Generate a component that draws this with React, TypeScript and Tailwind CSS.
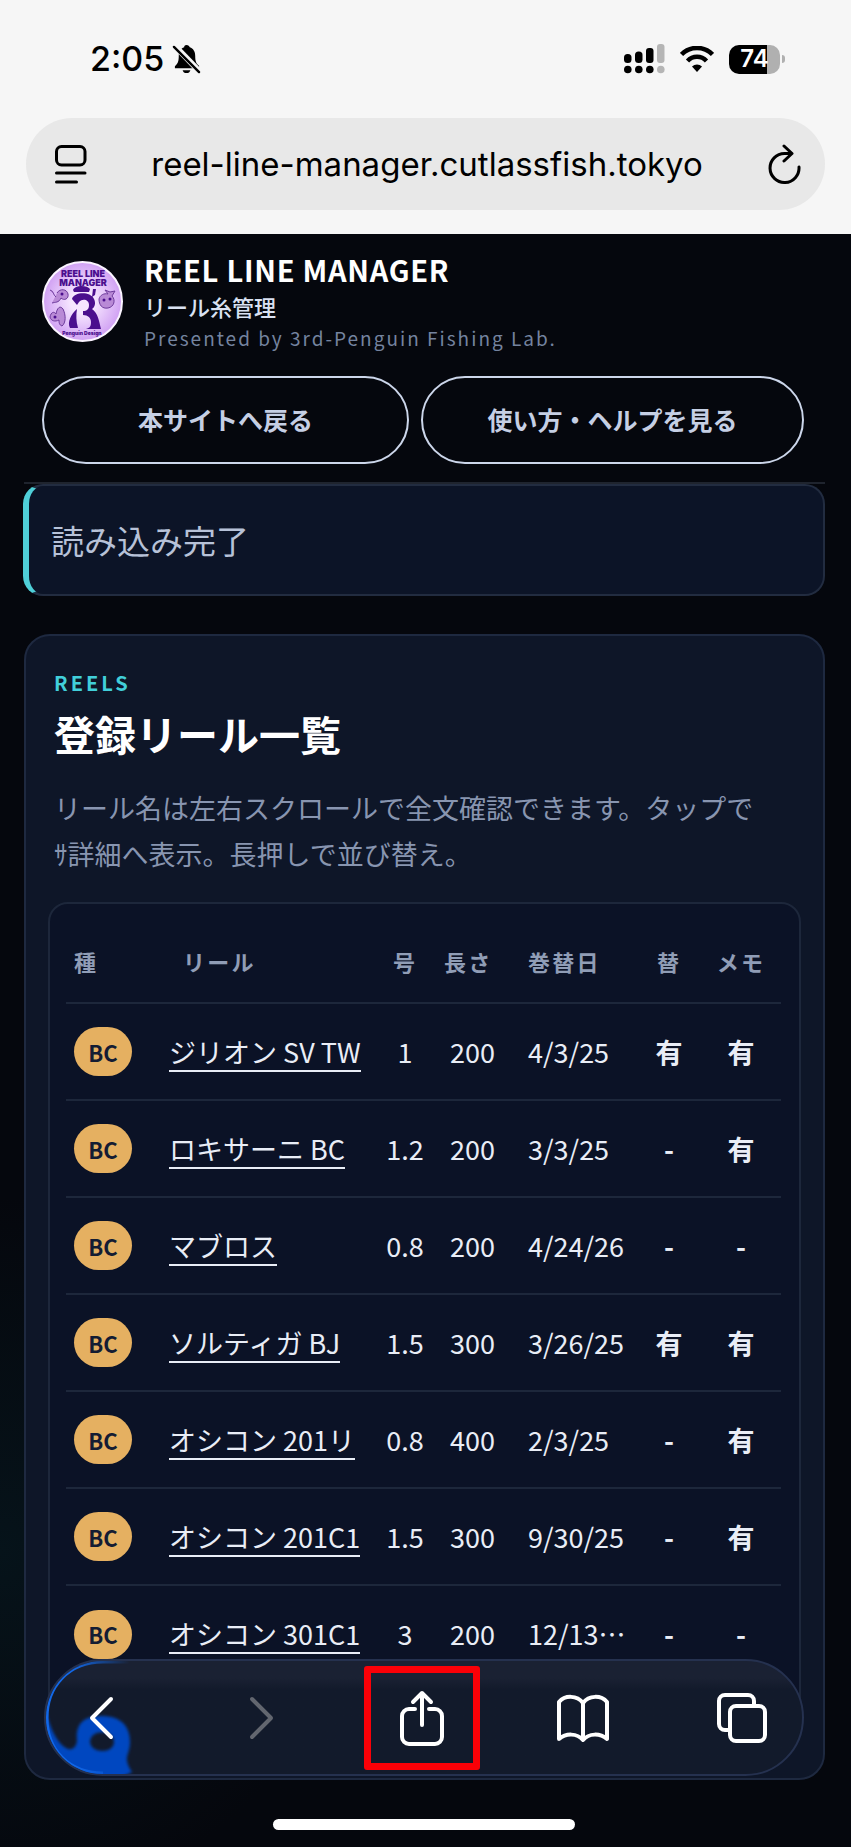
type Reel = {
  name: string
  size: string
  length: string
  date: string
  change: string
  memo: string
}

const reels: Reel[] = [
  { name: 'ジリオン SV TW', size: '1', length: '200', date: '4/3/25', change: '有', memo: '有' },
  { name: 'ロキサーニ BC', size: '1.2', length: '200', date: '3/3/25', change: '-', memo: '有' },
  { name: 'マブロス', size: '0.8', length: '200', date: '4/24/26', change: '-', memo: '-' },
  { name: 'ソルティガ BJ', size: '1.5', length: '300', date: '3/26/25', change: '有', memo: '有' },
  { name: 'オシコン 201リ', size: '0.8', length: '400', date: '2/3/25', change: '-', memo: '有' },
  { name: 'オシコン 201C1', size: '1.5', length: '300', date: '9/30/25', change: '-', memo: '有' },
  { name: 'オシコン 301C1', size: '3', length: '200', date: '12/13⋯', change: '-', memo: '-' },
]

function StatusBar() {
  return (
    <div className="flex h-[118px] items-center justify-between pl-[90px] pr-[66px]">
      <div className="flex items-center gap-2">
        <span className="text-[34px] font-medium leading-none">2:05</span>
        <svg width="29" height="31" viewBox="0 0 30 32" aria-label="消音">
          <path d="M15 1c1.900 0 3 1 3.400 2.400C22 4.600 24 8 24 12c0 6 1 8 4 10.500V25H3v-2c3-3 4-5 4-11 0-4 2-7.400 5.600-8.600C12.500 2 13.200 1 15 1z" />
          <path d="M11 27h8c-.5 2-2 3-4 3s-3.500-1-4-3z" />
          <path d="M3 2l27 28" stroke="#f6f6f6" strokeWidth="6" />
          <path d="M2 3l26 26" stroke="#000" strokeWidth="2.500" strokeLinecap="round" />
        </svg>
      </div>
      <div className="flex items-center gap-[15px]">
        <svg width="41" height="30" viewBox="0 0 41 30" aria-label="電波">
          <rect x="0" y="10" width="7.500" height="9" rx="3.500" />
          <rect x="11" y="7.500" width="7.500" height="11.500" rx="3.500" />
          <rect x="22" y="4" width="7.500" height="15" rx="3" />
          <rect x="33" y="0" width="7.500" height="19" rx="3" fill="#b5b5b5" />
          <circle cx="3.800" cy="25.500" r="3.800" />
          <circle cx="14.800" cy="25.500" r="3.800" />
          <circle cx="25.800" cy="25.500" r="3.800" />
          <circle cx="36.800" cy="25.500" r="3.800" fill="#b5b5b5" />
        </svg>
        <svg width="34" height="26" viewBox="0 0 34 26" aria-label="Wi-Fi">
          <path d="M1.500 8.500a21.500 21.500 0 0 1 31 0" fill="none" stroke="#000" strokeWidth="4.500" />
          <path d="M7.500 15a13 13 0 0 1 19 0" fill="none" stroke="#000" strokeWidth="4.500" />
          <path d="M17 26l-5-5.500a7.500 7.500 0 0 1 10 0z" />
        </svg>
        <div className="flex items-center gap-[2px]">
          <div className="flex h-[29px] w-[51px] items-center justify-center rounded-[10px] bg-[linear-gradient(90deg,#000_74%,#b0b0b0_74%)] text-[24px] font-semibold leading-none text-white">
            74
          </div>
          <div className="h-2 w-[3px] rounded-r bg-[#b0b0b0]" />
        </div>
      </div>
    </div>
  )
}

function AddressBar() {
  return (
    <div className="mx-[26px] flex h-[92px] items-center justify-between rounded-full bg-[#e8e8e8] pl-[29px] pr-[22px]">
      <button type="button" aria-label="ページメニュー">
        <svg width="32" height="40" viewBox="0 0 32 40" fill="none" stroke="#000" strokeWidth="3" strokeLinecap="round">
          <rect x="1.500" y="2.500" width="28.500" height="18.500" rx="5" />
          <path d="M1.500 29h28.500M1.500 38h20" />
        </svg>
      </button>
      <span className="text-[33px] leading-[40px]">reel-line-manager.cutlassfish.tokyo</span>
      <button type="button" aria-label="再読み込み">
        <svg width="36" height="40" viewBox="0 0 36 40" fill="none" stroke="#000" strokeWidth="3" strokeLinecap="round" strokeLinejoin="round">
          <path d="M32 23A14.500 14.500 0 1 1 17.500 9.500H24" />
          <path d="M17 2l8 7.500-8 7.500" />
        </svg>
      </button>
    </div>
  )
}

function Logo() {
  return (
    <svg width="81" height="81" viewBox="0 0 81 81" className="shrink-0" role="img" aria-label="Reel Line Manager">
      <defs>
        <radialGradient id="disc">
          <stop offset="0.300" stopColor="#f6e6ff" />
          <stop offset="1" stopColor="#d0a0f3" />
        </radialGradient>
      </defs>
      <circle cx="40.500" cy="40.500" r="39.500" fill="url(#disc)" stroke="#fbf4ff" strokeWidth="2" />
      <g fill="#4b0f8e" fontFamily="Inter, sans-serif" fontWeight="900" textAnchor="middle">
        <text x="41" y="15.500" fontSize="9">REEL LINE</text>
        <text x="41" y="24.500" fontSize="9">MANAGER</text>
        <text x="40" y="74" fontSize="5">Penguin Design</text>
      </g>
      <g fill="#4b0f8e">
        <path d="M31 29c2-5 14-5 17-1l-1 3H32z" />
        <path d="M51 28h3l-1 6-3 2z" />
        <path d="M30 38c2-7 18-8 22 0 2 4 1 8-2 10 6 4 7 12 9 20H44c4-1 5-3 5-7s-3-7-8-7v-4c4 0 6-2 6-6 0-5-6-7-10-3l-2 3z" />
        <path d="M28 67c-3-6 1-14 7-19-1 6-1 12 1 19z" />
      </g>
      <g fill="#b98ad6" stroke="#6d3a9c" strokeWidth="1">
        <path d="M8 29c4 1 3 5 6 7M15 32c3-5 10-4 11 1s-4 7-7 4c-2 5-6 4-9 5M57 38c1-4 5-6 9-5l-3-4 5 2 5-1-3 5c4 4 2 11-4 12s-9-3-9-9z" />
        <path d="M8 56c1-5 4-6 6-3 1-6 4-9 7-5 3 6 3 14-1 17-3-1-3-4-3-6-4 2-8 1-9-3z" />
      </g>
      <g fill="#4b0f8e">
        <circle cx="20" cy="33" r="1.500" />
        <circle cx="62" cy="39" r="1.500" />
        <circle cx="68" cy="38" r="1.500" />
        <circle cx="13" cy="56" r="1.500" />
      </g>
    </svg>
  )
}

function SiteHeader() {
  return (
    <header className="border-b-2 border-[#1f242e] px-[18px] pb-[18px] pt-[14px]">
      <div className="flex items-start gap-[21px]">
        <div className="pt-[13px]">
          <Logo />
        </div>
        <div>
          <h1 className="text-[29px] font-bold leading-[42px] tracking-wide text-white">REEL LINE MANAGER</h1>
          <p className="text-[22px] font-medium leading-[32px] text-[#d9e1f2]">リール糸管理</p>
          <p className="text-[19px] leading-[32px] tracking-[2px] text-[#74839f]">
            Presented by 3rd-Penguin Fishing Lab.
          </p>
        </div>
      </div>
      <nav className="mt-[22px] grid grid-cols-[367fr_383fr] gap-3 pr-[3px] text-center text-[25px] font-bold text-[#c5cfe4]">
        <a href="#home" className="rounded-full border-2 border-[#ccd6ea] pb-[23px] pt-[21px] leading-[40px]">本サイトへ戻る</a>
        <a href="#help" className="rounded-full border-2 border-[#ccd6ea] pb-[23px] pt-[21px] leading-[40px]">使い方・ヘルプを見る</a>
      </nav>
    </header>
  )
}

function ReelTable() {
  return (
    <div className="mx-[22px] rounded-[20px] border-2 border-[#1d273b] bg-[#0b1226] pb-[42px] pl-4 pr-[18px] pt-4">
      <table className="w-full table-fixed text-[27px] leading-[36px] text-[#e9edf6]">
        <colgroup>
          <col className="w-[89px]" />
          <col />
          <col className="w-[54px]" />
          <col className="w-[82px]" />
          <col className="w-[123px]" />
          <col className="w-[64px]" />
          <col className="w-[80px]" />
        </colgroup>
        <thead>
          <tr className="h-[83px] border-b-2 border-[#1d273b] text-left text-[22px] tracking-widest text-[#909db6]">
            <th className="pl-2 font-bold">種</th>
            <th className="pl-[28px] font-bold">リール</th>
            <th className="text-center font-bold">号</th>
            <th className="pl-3 font-bold">長さ</th>
            <th className="pl-[14px] font-bold">巻替日</th>
            <th className="text-center font-bold">替</th>
            <th className="text-center font-bold">メモ</th>
          </tr>
        </thead>
        <tbody>
          {reels.map((reel) => (
            <tr key={reel.name} className="h-[97px] border-b-2 border-[#1d273b] last:border-b-0">
              <td className="pl-2">
                <span className="flex h-[49px] w-[58px] items-center justify-center rounded-full bg-[#e5b061] text-[22px] font-bold text-[#141c33]">
                  BC
                </span>
              </td>
              <td className="pl-[14px]">
                <a href="#reel" className="inline-block whitespace-nowrap border-b-2 border-[#e9edf6] align-middle">
                  {reel.name}
                </a>
              </td>
              <td className="text-center">{reel.size}</td>
              <td className="pr-[19px] text-right">{reel.length}</td>
              <td className="whitespace-nowrap pl-[14px]">{reel.date}</td>
              <td className="text-center font-bold">{reel.change}</td>
              <td className="text-center font-bold">{reel.memo}</td>
            </tr>
          ))}
        </tbody>
      </table>
    </div>
  )
}

function Toolbar() {
  const icon = 'flex h-[104px] w-[112px] items-center justify-center'
  return (
    <div className="fixed inset-x-0 bottom-0 pb-[17px] pl-[44px] pr-[47px]">
      <nav className="relative flex h-[117px] items-center justify-between overflow-hidden rounded-full border-2 border-[#25314f] bg-[#131b2c] bg-linear-to-b from-[#1a2133] from-15% to-[#121a2b] to-25% pr-1 text-white">
        <svg width="90" height="113" viewBox="0 0 90 113" className="absolute left-0 top-0" aria-hidden="true">
          <defs>
            <filter id="soft">
              <feGaussianBlur stdDeviation="1.500" />
            </filter>
            <linearGradient id="rim" x1="0" x2="1">
              <stop offset="0.300" stopColor="#1268e8" />
              <stop offset="0.950" stopColor="#1268e8" stopOpacity="0" />
            </linearGradient>
          </defs>
          <path
            fillRule="evenodd"
            filter="url(#soft)"
            fill="#0646c0"
            d="M0 50c4 18 12 34 22 38 5 1 8-2 9-8-2-18 8-25 24-25 20 0 29 10 29 26 0 13-7 14 0 27l2 3-16 8H30C8 112-6 84 0 50zM44 81c1 12 24 12 24 0 0-13-24-13-24 0z"
          />
          <path d="M88 1H57C22 1 1 26 1 57s21 55 56 55" fill="none" stroke="url(#rim)" strokeWidth="3" />
        </svg>
        <button type="button" aria-label="戻る" className={icon}>
          <svg className="relative" width="26" height="44" viewBox="0 0 26 44" fill="none" stroke="currentColor" strokeWidth="4" strokeLinecap="round" strokeLinejoin="round">
            <path d="M22 3L3 22l19 19" />
          </svg>
        </button>
        <button type="button" aria-label="進む" className={icon}>
          <svg width="26" height="44" viewBox="0 0 26 44" fill="none" stroke="#62666f" strokeWidth="4" strokeLinecap="round" strokeLinejoin="round">
            <path d="M4 3l19 19L4 41" />
          </svg>
        </button>
        <button type="button" aria-label="共有" className="flex h-[104px] w-[116px] items-center justify-center rounded-[3px] border-[7px] border-[#fb0007]">
          <svg width="44" height="56" viewBox="0 0 44 56" fill="none" stroke="currentColor" strokeWidth="4" strokeLinecap="round" strokeLinejoin="round">
            <path d="M15 19H9a7 7 0 0 0-7 7v21a7 7 0 0 0 7 7h26a7 7 0 0 0 7-7V26a7 7 0 0 0-7-7h-6M22 35V3M13 12l9-9 9 9" />
          </svg>
        </button>
        <button type="button" aria-label="ブックマーク" className={icon}>
          <svg width="54" height="48" viewBox="0 0 54 48" fill="none" stroke="currentColor" strokeWidth="4" strokeLinecap="round" strokeLinejoin="round">
            <path d="M27 9C21 1 9 1 3 8v37c7-6 18-6 24 1 6-7 17-7 24-1V8C45 1 33 1 27 9zM27 9v36" />
          </svg>
        </button>
        <button type="button" aria-label="タブ一覧" className={icon}>
          <svg width="52" height="52" viewBox="0 0 52 52" fill="none" stroke="currentColor" strokeWidth="4" strokeLinecap="round" strokeLinejoin="round">
            <rect x="14" y="14" width="35" height="35" rx="6" />
            <path d="M13 38H9a6 6 0 0 1-6-6V9a6 6 0 0 1 6-6h23a6 6 0 0 1 6 6v4" />
          </svg>
        </button>
      </nav>
      <div className="mx-auto mt-[43px] h-[11px] w-[302px] rounded-full bg-white" />
    </div>
  )
}

export default function App() {
  return (
    <div className="min-h-screen bg-[#05070d] bg-[radial-gradient(circle_at_0%_84%,#06131a,#05070d_20%)] font-['Noto_Sans_CJK_JP',sans-serif]">
      <div className="bg-[#f6f6f6] pb-6 font-[Inter,sans-serif] text-black">
        <StatusBar />
        <AddressBar />
      </div>
      <div className="pb-[66px] pl-6 pr-[26px]">
        <SiteHeader />
        <main>
          <div role="status" className="-ml-px rounded-[20px] border-2 border-l-[6px] border-[#222c40] border-l-[#4fcfd8] bg-[#0c1427] px-[22px] py-[29px] text-[33px] leading-[50px] text-[#b7c2d8]">
            読み込み完了
          </div>
          <section className="mt-[38px] rounded-[26px] border-2 border-[#1e2940] bg-[#0e1628] pb-[52px] pt-[27px]">
            <div className="px-7">
              <p className="text-[20px] font-bold leading-[40px] tracking-[3px] text-[#41cfda]">REELS</p>
              <h2 className="text-[41px] font-bold leading-[60px] text-white">登録リール一覧</h2>
              <p className="mt-[22px] pb-[25px] text-[27px] leading-[46px] text-[#8895b0]">
                リール名は左右スクロールで全文確認できます。タップで<br />
                ｻ詳細へ表示。長押しで並び替え。
              </p>
            </div>
            <ReelTable />
          </section>
        </main>
      </div>
      <Toolbar />
    </div>
  )
}
